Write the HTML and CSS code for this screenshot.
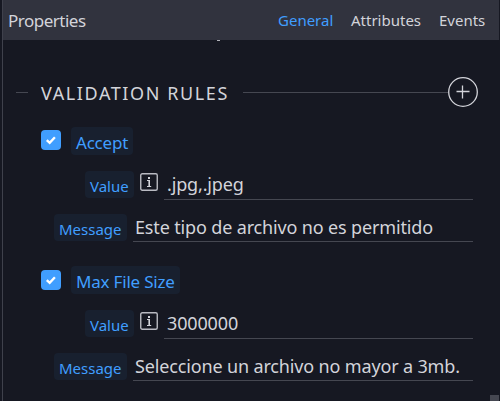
FILE: index.html
```
<!DOCTYPE html>
<html lang="es">
<head>
    <meta charset="UTF-8">
    <title>Properties</title>
    <link rel="stylesheet" href="styles.css">
</head>
<body>
    <div class="panel">
        <div class="header">
            <span class="header-title">Properties</span>
            <span class="tab active tab-general">General</span>
            <span class="tab tab-attributes">Attributes</span>
            <span class="tab tab-events">Events</span>
        </div>
        <div class="content">
            <div class="scrolled-text"></div>
            <div class="legend">
                <span class="line line-left"></span>
                <span class="legend-text">VALIDATION RULES</span>
                <span class="line line-right"></span>
                <svg class="add" width="30" height="30" viewBox="0 0 30 30">
                    <circle cx="15" cy="15" r="14.3"/>
                    <path d="M8.5 14.5h13M14.5 8.5v13"/>
                </svg>
            </div>
            <div class="rule">
                <div class="rule-head">
                    <svg class="check" width="20" height="20" viewBox="0 0 20 20">
                        <rect width="20" height="20" rx="4"/>
                        <path d="M5.8 10.1l2.9 2.7 5.2-5.5"/>
                    </svg>
                    <span class="label label-accept">Accept</span>
                </div>
                <div class="row row-value">
                    <span class="label label-small label-value">Value</span>
                    <svg class="info" width="18" height="18" viewBox="0 0 18 18">
                        <rect x=".75" y=".75" width="16.5" height="16.5" rx="1.5"/>
                        <path d="M8 4h2v2H8zM7 7h3v6h1.2v1H7v-1h1.4V8H7z"/>
                    </svg>
                    <span class="field">.jpg,.jpeg</span>
                </div>
                <div class="row row-message">
                    <span class="label label-small label-message">Message</span>
                    <span class="field">Este tipo de archivo no es permitido</span>
                </div>
            </div>
            <div class="rule">
                <div class="rule-head">
                    <svg class="check check-low" width="20" height="20" viewBox="0 0 20 20">
                        <rect width="20" height="20" rx="4"/>
                        <path d="M5.8 10.1l2.9 2.7 5.2-5.5"/>
                    </svg>
                    <span class="label label-size">Max File Size</span>
                </div>
                <div class="row row-value">
                    <span class="label label-small label-value">Value</span>
                    <svg class="info" width="18" height="18" viewBox="0 0 18 18">
                        <rect x=".75" y=".75" width="16.5" height="16.5" rx="1.5"/>
                        <path d="M8 4h2v2H8zM7 7h3v6h1.2v1H7v-1h1.4V8H7z"/>
                    </svg>
                    <span class="field">3000000</span>
                </div>
                <div class="row row-message">
                    <span class="label label-small label-message">Message</span>
                    <span class="field">Seleccione un archivo no mayor a 3mb.</span>
                </div>
            </div>
        </div>
        <div class="scroll-corner"></div>
    </div>
</body>
</html>
```
FILE: styles.css
```
* {
    box-sizing: border-box;
}
body {
    margin: 0;
    background-color: #161822;
    color: #d3d4da;
    font-family: "Noto Sans", "Open Sans", sans-serif;
    overflow: hidden;
}
.panel {
    position: relative;
    height: 401px;
    margin: 0 1px 0 2px;
    border-left: 1px solid #3f414c;
    overflow: hidden;
}
.header {
    display: flex;
    align-items: center;
    height: 40px;
    padding: 0 14px 0 5px;
    background-color: #31333e;
    white-space: nowrap;
}
.header-title {
    flex: 1;
    font-size: 17px;
    letter-spacing: -0.5px;
}
.tab {
    font-size: 15px;
}
.tab-general {
    width: 55px;
}
.tab-attributes {
    width: 70px;
    margin: 0 18px;
}
.tab-events {
    width: 46px;
}
.tab.active {
    color: #409eff;
}
.content {
    padding: 0 26px 0 38px;
}
/* bottom edge of the text scrolled under the header */
.scrolled-text {
    width: 3px;
    height: 1px;
    margin-left: 176px;
    background-color: #b0b1b8;
}
.legend {
    display: flex;
    align-items: center;
    height: 30px;
    margin: 36px -5px 20px -25px;
}
.line {
    height: 1px;
    margin-top: 1px;
    background-color: #454751;
}
.line-left {
    width: 12px;
}
.line-right {
    flex: 1;
}
.legend-text {
    width: 202px;
    margin-left: 13px;
    padding-top: 2px;
    font-size: 18px;
    letter-spacing: 1.6px;
    white-space: nowrap;
}
.add {
    fill: none;
    stroke: #d3d4da;
    stroke-width: 1.3;
}
.rule {
    margin-bottom: 24px;
}
.rule-head {
    display: flex;
    align-items: flex-start;
    height: 28px;
}
.check {
    margin: 3px 10px 0 0;
    fill: #409eff;
}
.check-low {
    margin-top: 4px;
}
.check path {
    fill: none;
    stroke: #fff;
    stroke-width: 2.4;
}
.label {
    height: 28px;
    padding-left: 5px;
    border-radius: 4px;
    background-color: #18202f;
    color: #409eff;
    font-size: 17px;
    letter-spacing: -0.2px;
    line-height: 31px;
    white-space: nowrap;
}
.label-accept {
    width: 62px;
}
.label-size {
    width: 109px;
}
.label-small {
    height: 27px;
    font-size: 15px;
    letter-spacing: 0;
    line-height: 30px;
}
.label-value {
    width: 49px;
}
.label-message {
    width: 73px;
}
.row {
    display: flex;
    align-items: flex-start;
}
.row-value {
    height: 29px;
    margin: 16px 0 14px 44px;
}
.row-message {
    height: 28px;
    margin-left: 13px;
}
.info {
    margin: 2px 6px 0;
    fill: #d3d4da;
}
.info rect {
    fill: none;
    stroke: #b9bac2;
    stroke-width: 1.4;
}
.field {
    flex: 1;
    height: 100%;
    padding-left: 3px;
    border-bottom: 1px solid #454751;
    font-size: 18px;
    letter-spacing: -0.15px;
    line-height: 26px;
    white-space: nowrap;
}
.row-message .field {
    margin-left: 6px;
    padding-left: 2px;
}
.scroll-corner {
    position: absolute;
    right: 0;
    bottom: 0;
    width: 9px;
    height: 6px;
    background-color: #454751;
}
```
